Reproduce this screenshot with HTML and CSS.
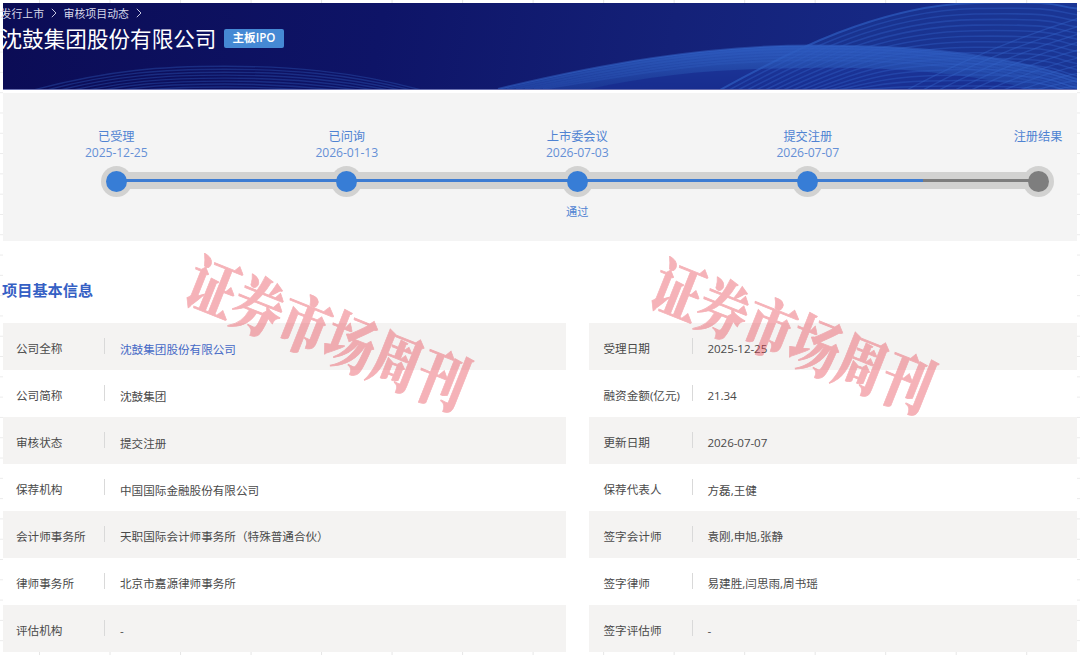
FILE: index.html
```html
<!DOCTYPE html>
<html lang="zh-CN">
<head>
<meta charset="utf-8">
<title>沈鼓集团股份有限公司</title>
<link rel="stylesheet" href="styles.css">
</head>
<body>
<main class="page">
  <header class="hero">
    <svg class="hero-art" viewBox="3 3 1074 87" preserveAspectRatio="none" aria-hidden="true">
      <defs>
        <linearGradient id="band" gradientUnits="userSpaceOnUse" x1="0" y1="46" x2="0" y2="90">
          <stop offset="0" stop-color="#2c58bd"/>
          <stop offset="0.45" stop-color="#264eae" stop-opacity="0.9"/>
          <stop offset="1" stop-color="#1e3f9f" stop-opacity="0.75"/>
        </linearGradient>
      </defs>
      <path d="M722 90C790 52 880 5 975 3H1077V90Z" fill="#1c3a98" opacity=".6"/>
      <path d="M498 90C600 65 705 46 812 46C910 46 1000 54 1077 80V90Z" fill="url(#band)"/>
      <path d="M590 90C650 76 720 69 800 69C880 67 960 72 1030 90Z" fill="#16268a" opacity=".6"/>
      <g id="waves" fill="none"></g>
    </svg>
    <div class="hero-text">
      <nav class="crumbs">
        <span>发行上市</span>
        <svg class="chev" viewBox="0 0 6 10"><path d="M.8.8 5 5 .8 9.2"/></svg>
        <span>审核项目动态</span>
        <svg class="chev" viewBox="0 0 6 10"><path d="M.8.8 5 5 .8 9.2"/></svg>
      </nav>
      <div class="title-row">
        <h1>沈鼓集团股份有限公司</h1>
        <span class="tag">主板IPO</span>
      </div>
    </div>
  </header>

  <section class="progress">
    <ol class="steps">
      <li class="step"><div class="cap">已受理<br><span class="date">2025-12-25</span></div><i class="dot"></i></li>
      <li class="step"><div class="cap">已问询<br><span class="date">2026-01-13</span></div><i class="dot"></i></li>
      <li class="step"><div class="cap">上市委会议<br><span class="date">2026-07-03</span></div><i class="dot"></i><div class="result">通过</div></li>
      <li class="step half"><div class="cap">提交注册<br><span class="date">2026-07-07</span></div><i class="dot"></i></li>
      <li class="step last"><div class="cap">注册结果</div><i class="dot"></i></li>
    </ol>
  </section>

  <section class="info">
    <h2>项目基本信息</h2>
    <div class="tables">
      <dl class="table">
        <div class="row"><dt>公司全称</dt><dd class="link">沈鼓集团股份有限公司</dd></div>
        <div class="row"><dt>公司简称</dt><dd>沈鼓集团</dd></div>
        <div class="row"><dt>审核状态</dt><dd>提交注册</dd></div>
        <div class="row"><dt>保荐机构</dt><dd>中国国际金融股份有限公司</dd></div>
        <div class="row"><dt>会计师事务所</dt><dd>天职国际会计师事务所（特殊普通合伙）</dd></div>
        <div class="row"><dt>律师事务所</dt><dd>北京市嘉源律师事务所</dd></div>
        <div class="row"><dt>评估机构</dt><dd>-</dd></div>
      </dl>
      <dl class="table">
        <div class="row"><dt>受理日期</dt><dd class="num">2025-12-25</dd></div>
        <div class="row"><dt>融资金额(亿元)</dt><dd class="num">21.34</dd></div>
        <div class="row"><dt>更新日期</dt><dd class="num">2026-07-07</dd></div>
        <div class="row"><dt>保荐代表人</dt><dd>方磊,王健</dd></div>
        <div class="row"><dt>签字会计师</dt><dd>袁刚,申旭,张静</dd></div>
        <div class="row"><dt>签字律师</dt><dd>易建胜,闫思雨,周书瑶</dd></div>
        <div class="row"><dt>签字评估师</dt><dd>-</dd></div>
      </dl>
    </div>
  </section>
</main>
<div class="mark mark-left">证券市场周刊</div>
<div class="mark mark-right">证券市场周刊</div>
<script src="waves.js"></script>
</body>
</html>
```

FILE: waves.js
```js
const group = document.getElementById('waves');
function line(d, color, opacity, width) {
  const p = document.createElementNS('http://www.w3.org/2000/svg', 'path');
  p.setAttribute('d', d);
  p.setAttribute('stroke', color);
  p.setAttribute('stroke-opacity', opacity);
  p.setAttribute('stroke-width', width);
  group.appendChild(p);
}
// low arcs at the left
for (let k = 0; k < 8; k++) {
  const y = 67 + k * 3;
  line(`M${30 + k * 9} ${92 + k}C${110 + k * 3} ${y + 3} ${165} ${y} 225 ${y}S${350 - k * 3} ${y + 4} ${425 - k * 6} ${92 + k}`, '#2a4fae', 0.45, 1.4);
}
// large fan rising to the right
for (let k = 0; k < 16; k++) {
  line(`M${720 + k * 9} 91C${790 + k * 6} ${52 + k * 2.6} ${880} ${5 + k * 5.4} ${975} ${3 + k * 5.6}S1050 ${6 + k * 6} 1080 ${9 + k * 6.2}`, '#2e5cc0', k ? 0.45 : 0.7, k ? 1.6 : 2);
}
// diagonal mesh in the right corner
for (let k = 0; k < 11; k++) {
  line(`M${905 + k * 16} 92Q${985 + k * 11} ${48 + k * 4} 1080 ${18 + k * 8}`, '#3464c8', 0.42, 1.4);
}
// strands following the bright band
for (let k = 0; k < 6; k++) {
  line(`M${498 + k * 9} 90C${600 + k * 7} ${65 + k * 2} ${705} ${46 + k * 3} 812 ${46 + k * 3}S1000 ${54 + k * 3} 1077 ${80 + k * 3}`, '#3464c8', k ? 0.25 : 0.5, 2);
}
```

FILE: styles.css
```css
* { box-sizing: border-box; }
body {
  margin: 0;
  width: 1080px;
  height: 655px;
  overflow: hidden;
  position: relative;
  font-family: "Open Sans", "Noto Sans CJK SC", sans-serif;
  font-size: 11.6px;
  color: #4a4a4a;
  background-color: #fff;
  background-image:
    linear-gradient(90deg, #e6e6e6 1px, transparent 1px),
    linear-gradient(#ebebeb 1px, transparent 1px);
  background-size: 70.52px 100%, 100% 20.3px;
  background-position: 39px 0, 0 11px;
}
.page {
  margin: 3px 3px 4px;
  height: 648px;
  background: #fff;
}
.hero {
  display: grid;
  height: 87px;
  color: #fff;
  background: linear-gradient(100deg, #0b0c55 0%, #0e1467 35%, #142178 62%, #183090 100%);
  border-bottom: 1px solid #6a70b0;
}
.hero-art, .hero-text { grid-area: 1 / 1; }
.hero-art { width: 1074px; height: 86px; }
.hero-text { margin-left: -2.5px; }
.crumbs {
  display: flex;
  align-items: center;
  height: 20px;
  font-size: 10.9px;
  color: #d6d8ea;
}
.chev {
  width: 6px;
  height: 10px;
  margin: 0 6.5px 0 7px;
  fill: none;
  stroke: #c4c6df;
  stroke-width: 1;
}
.title-row {
  display: flex;
  align-items: center;
  height: 31px;
}
h1 {
  margin: 0;
  font-size: 21.6px;
  line-height: 31px;
  font-weight: 400;
}
.tag {
  margin-left: 7.5px;
  width: 60px;
  height: 19px;
  border-radius: 2px;
  background: #4589d4;
  font-size: 11.6px;
  line-height: 18px;
  font-weight: 600;
  text-align: center;
}
.progress {
  margin-top: 3px;
  height: 148px;
  padding-top: 36px;
  background: #f4f4f4;
}
.steps {
  display: grid;
  grid-template-columns: repeat(4, 230.5px) 1fr;
  margin: 0 0 0 -2px;
  padding: 0;
  list-style: none;
  width: 1076px;
}
.step {
  display: grid;
  grid-template-rows: 33px 31px 32px;
  justify-items: center;
  position: relative;
  color: #4f83d2;
  font-size: 12.2px;
  line-height: 16px;
  text-align: center;
}
.last { justify-self: end; width: 78px; }
.date { letter-spacing: -.1px; color: #6590d6; }
.dot {
  display: grid;
  place-items: center;
  width: 31px;
  height: 31px;
  margin-top: 4px;
  border-radius: 50%;
  background: #d2d2d1;
}
.dot::after {
  content: "";
  position: relative;
  z-index: 3;
  width: 21px;
  height: 21px;
  border-radius: 50%;
  background: #377dd6;
}
.step:not(.last)::before,
.step:not(.last)::after {
  content: "";
  position: absolute;
  left: 50%;
  width: 100%;
}
.step::before { z-index: 1; top: 43px; height: 17px; background: #d2d2d1; }
.step::after { z-index: 2; top: 50px; height: 3px; background: #3d7cd2; }
.step.half::after { background: linear-gradient(90deg, #3d7cd2 50%, #7e7e7e 50%); }
.last .dot::after { background: #7e7e7e; }
.result { padding-top: 11px; font-size: 11.2px; }
.info { padding-top: 38px; }
h2 {
  margin: 0 0 0 -1px;
  height: 44.4px;
  font-size: 15.2px;
  line-height: 23px;
  font-weight: 700;
  color: #3560c4;
}
.tables {
  display: grid;
  grid-template-columns: 563px 488px;
  column-gap: 23px;
}
.table { margin: 0; }
.row {
  display: flex;
  align-items: center;
  height: 46.9px;
  padding: 4px 0 0 13px;
}
.row:nth-child(odd) { background: #f4f3f2; }
.row dt { width: 88px; padding-top: 1px; line-height: 18px; white-space: nowrap; }
.row dd {
  margin: 0;
  display: flex;
  align-items: center;
}
.row dd::before {
  content: "";
  width: 1px;
  height: 16px;
  margin: -5px 15px 0 0;
  background: #d9d9d9;
}
.row dd.num { letter-spacing: -.08px; }
.row dd.link { color: #4569c6; }
.table + .table .row { padding-left: 14.5px; }
.mark {
  position: absolute;
  width: 378px;
  font-family: "Noto Serif CJK SC", "Noto Sans CJK SC", serif;
  font-size: 63px;
  line-height: 63px;
  font-weight: 900;
  white-space: nowrap;
  color: #e8414f;
  -webkit-text-stroke: .8px #e8414f;
  opacity: .4;
  transform: rotate(21.7deg) scaleX(.784);
}
.mark-left { left: 140px; top: 299px; }
.mark-right { left: 605px; top: 302px; }
```
